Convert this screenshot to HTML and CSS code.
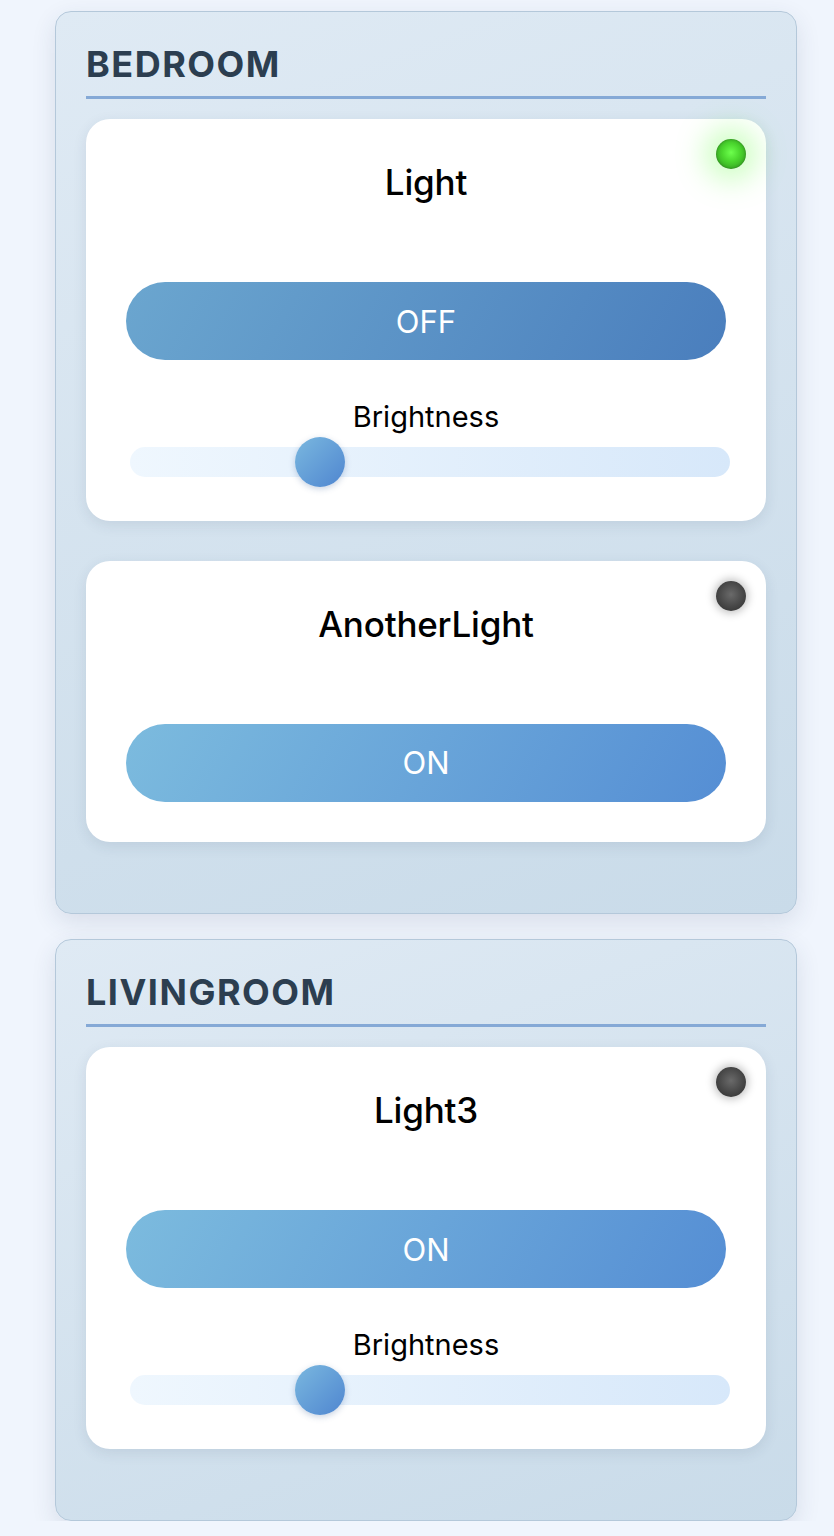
FILE: index.html
```html
<!DOCTYPE html>
<html lang="en">
<head>
<meta charset="utf-8">
<title>Rooms</title>
<link rel="stylesheet" href="styles.css">
</head>
<body>
<main class="rooms">
  <section class="room">
    <h2 class="room-title">BEDROOM</h2>
    <div class="device">
      <span class="led led-on"></span>
      <h3 class="device-name">Light</h3>
      <button class="toggle toggle-off">OFF</button>
      <div class="control">
        <label class="control-label">Brightness</label>
        <input class="slider" type="range" min="0" max="100" value="30">
      </div>
    </div>
    <div class="device">
      <span class="led led-off"></span>
      <h3 class="device-name">AnotherLight</h3>
      <button class="toggle toggle-on">ON</button>
    </div>
  </section>
  <section class="room">
    <h2 class="room-title">LIVINGROOM</h2>
    <div class="device">
      <span class="led led-off"></span>
      <h3 class="device-name">Light3</h3>
      <button class="toggle toggle-on">ON</button>
      <div class="control">
        <label class="control-label">Brightness</label>
        <input class="slider" type="range" min="0" max="100" value="30">
      </div>
    </div>
  </section>
</main>
</body>
</html>
```

FILE: styles.css
```css
* { box-sizing: border-box; }
html, body {
  margin: 0;
  padding: 0;
  background: #f0f5fd;
  font-family: Inter, "Noto Sans", sans-serif;
}
.rooms {
  padding: 11px 37px 0 55px;
  display: flex;
  flex-direction: column;
  gap: 25px;
}
.room {
  border: 1.5px solid #b4c8da;
  border-radius: 16px;
  background: linear-gradient(160deg, #dfeaf4 0%, #c9dbe9 100%);
  box-shadow: 0 8px 24px rgba(40, 60, 90, 0.12);
  padding: 31px 30px 31px 30px;
}
.room-title {
  margin: 0 0 20px 0;
  font-size: 36px;
  line-height: 1.2;
  font-weight: 700;
  letter-spacing: 1.5px;
  color: #2c3e50;
  padding-bottom: 10px;
  border-bottom: 3px solid #85a9d6;
}
.device {
  position: relative;
  background: #ffffff;
  border-radius: 24px;
  padding: 40px;
  margin-bottom: 40px;
  box-shadow: 0 4px 14px rgba(40, 60, 90, 0.10);
  display: flex;
  flex-direction: column;
  align-items: center;
}
.led {
  position: absolute;
  top: 20px;
  right: 20px;
  width: 30px;
  height: 30px;
  border-radius: 50%;
}
.led-on {
  background: radial-gradient(circle at 50% 45%, #6dff4d 0%, #4bd72e 40%, #2b8a1c 100%);
  box-shadow: 0 0 28px 12px rgba(130, 255, 100, 0.38), inset 0 0 3px rgba(0,0,0,0.3);
}
.led-off {
  background: radial-gradient(circle at 50% 45%, #6a6a6a 0%, #4a4a4a 50%, #2c2c2c 100%);
  box-shadow: 0 0 8px 2px rgba(0, 0, 0, 0.25);
}
.device-name {
  margin: 2px 0 79px 0;
  font-size: 35px;
  line-height: 1.2;
  font-weight: 500;
  color: #000;
  letter-spacing: -0.2px;
}
.toggle {
  width: 100%;
  height: 78px;
  border: none;
  border-radius: 39px;
  color: #fff;
  font-family: Inter, "Noto Sans", sans-serif;
  font-size: 31px;
  font-weight: 400;
  cursor: pointer;
}
.toggle-off {
  background: linear-gradient(120deg, #6ba6cf 0%, #4a7ebd 100%);
}
.toggle-on {
  background: linear-gradient(120deg, #7cbbde 0%, #558ed4 100%);
}
.control {
  width: 100%;
  margin-top: 40px;
  display: flex;
  flex-direction: column;
  align-items: center;
}
.control-label {
  font-size: 29px;
  line-height: 1.2;
  color: #000;
  margin-bottom: 12px;
}
.slider {
  -webkit-appearance: none;
  appearance: none;
  width: 600px;
  margin: 0 0 4px 8px;
  height: 30px;
  border-radius: 15px;
  background: linear-gradient(90deg, #eff7fe 0%, #d7e8fa 100%);
  outline: none;
}
.slider::-webkit-slider-runnable-track {
  height: 30px;
  border-radius: 15px;
  background: transparent;
}
.slider::-webkit-slider-thumb {
  -webkit-appearance: none;
  appearance: none;
  width: 50px;
  height: 50px;
  margin-top: -10px;
  border-radius: 50%;
  border: none;
  background: linear-gradient(135deg, #7ab8df 0%, #4f86d0 100%);
  box-shadow: 0 2px 6px rgba(40, 80, 140, 0.25);
}
```
